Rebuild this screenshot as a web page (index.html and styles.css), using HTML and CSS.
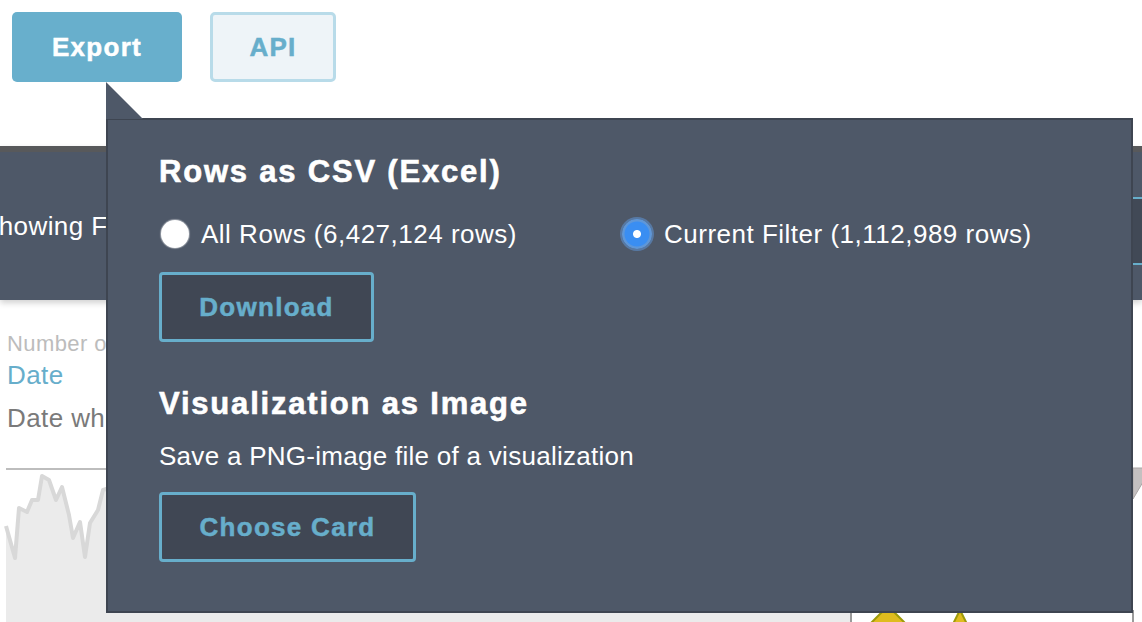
FILE: index.html
```html
<!DOCTYPE html>
<html lang="en">
<head>
<meta charset="utf-8">
<title>Export</title>
<link rel="stylesheet" href="styles.css">
</head>
<body>
<div class="page">
  <div class="toolbar">
    <button class="btn btn-primary">Export</button>
    <button class="btn btn-ghost">API</button>
  </div>

  <div class="band">
    <div class="band-text">Showing First</div>
    <div class="band-input"></div>
  </div>

  <div class="details">
    <div class="detail-label">Number of Rows by</div>
    <div class="detail-title">Date</div>
    <div class="detail-desc">Date when the record was created</div>
  </div>

  <svg class="chart" width="1142" height="162" viewBox="0 0 1142 162" xmlns="http://www.w3.org/2000/svg">
    <line x1="6" y1="9" x2="900" y2="9" stroke="#bdbdbd" stroke-width="2"/>
    <polygon fill="#ebebeb" points="6,66 15,98 19,48 27,52 32,40 38,40 42,16 49,20 56,40 62,27 69,55 73,78 80,62 85,97 90,63 98,50 103,30 120,25 140,60 170,40 200,70 240,35 280,55 320,30 360,65 400,45 440,80 480,50 520,60 560,40 600,75 640,55 680,70 720,45 760,90 800,60 840,130 851,150 851,162 6,162"/>
    <polyline fill="none" stroke="#d8d8d8" stroke-width="4" stroke-linejoin="round" points="6,66 15,98 19,48 27,52 32,40 38,40 42,16 49,20 56,40 62,27 69,55 73,78 80,62 85,97 90,63 98,50 103,30 120,25 140,60 170,40 200,70 240,35 280,55 320,30 360,65 400,45 440,80 480,50 520,60 560,40 600,75 640,55 680,70 720,45 760,90 800,60 840,130 851,150"/>
    <line x1="851" y1="150" x2="851" y2="162" stroke="#9a9a9a" stroke-width="2"/>
    <polygon fill="#dfbc1e" stroke="#9c9a0a" stroke-width="2" points="868,166 888,146 908,166"/>
    <polygon fill="#dfbc1e" stroke="#9c9a0a" stroke-width="2" points="952,166 960,150 968,166"/>
    <polygon fill="#c4c0c0" stroke="#aaa6a6" stroke-width="1" points="1133,8 1143,8 1143,22 1133,39"/>
    <line x1="1133" y1="150" x2="1133" y2="162" stroke="#9a9a9a" stroke-width="2"/>
  </svg>

  <div class="popover">
    <h2 class="pop-title">Rows as CSV (Excel)</h2>
    <div class="radios">
      <label class="option option-first">
        <span class="radio"></span>
        <span class="option-label">All Rows (6,427,124 rows)</span>
      </label>
      <label class="option">
        <span class="radio radio-checked"></span>
        <span class="option-label">Current Filter (1,112,989 rows)</span>
      </label>
    </div>
    <button class="btn btn-outline btn-download">Download</button>

    <h2 class="pop-title pop-title-second">Visualization as Image</h2>
    <p class="pop-text">Save a PNG-image file of a visualization</p>
    <button class="btn btn-outline btn-card">Choose Card</button>
  </div>
</div>
</body>
</html>
```

FILE: styles.css
```css
* {
  box-sizing: border-box;
}

html, body {
  margin: 0;
  padding: 0;
  background: #ffffff;
  overflow: hidden;
}

body {
  width: 1142px;
  height: 622px;
  font-family: "Liberation Sans", Arial, sans-serif;
}

.page {
  position: relative;
  width: 1142px;
  height: 622px;
}

.toolbar {
  display: flex;
  gap: 28px;
  padding: 12px 12px 0;
}

.btn {
  font-family: "Liberation Sans", Arial, sans-serif;
  font-weight: bold;
  font-size: 26px;
  line-height: 30px;
  letter-spacing: 1.3px;
  -webkit-text-stroke: 0.5px currentColor;
  border-radius: 5px;
  cursor: pointer;
  padding: 0;
}

.btn-primary {
  width: 170px;
  height: 70px;
  border: none;
  background: #68afcc;
  color: #ffffff;
}

.btn-ghost {
  width: 126px;
  height: 70px;
  border: 3px solid #b8dbe9;
  background: #eef4f8;
  color: #67aecb;
}

.band {
  margin-top: 64px;
  height: 154px;
  border-top: 6px solid #58595b;
  background: #4e5868;
  display: flex;
  align-items: center;
  box-shadow: 0 3px 6px rgba(0, 0, 0, 0.18);
}

.band-text {
  color: #ffffff;
  font-size: 26px;
  letter-spacing: 0.4px;
  margin-left: -19px;
  white-space: nowrap;
}

.band-input {
  margin-left: auto;
  margin-top: 10px;
  width: 200px;
  height: 68px;
  border-top: 2px solid #67aecb;
  border-bottom: 2px solid #67aecb;
  background: #414956;
}

.details {
  padding-left: 7px;
  white-space: nowrap;
}

.detail-label {
  margin-top: 31px;
  font-size: 22px;
  line-height: 26px;
  letter-spacing: 0.4px;
  color: #bcbcbc;
}

.detail-title {
  margin-top: 3px;
  font-size: 26px;
  line-height: 30px;
  letter-spacing: 0.4px;
  color: #67aecb;
}

.detail-desc {
  margin-top: 13px;
  font-size: 26px;
  line-height: 30px;
  letter-spacing: 0.4px;
  color: #7a7a7a;
}

.chart {
  display: block;
  margin-top: 27px;
}

/* popover overlay */
.popover {
  position: absolute;
  left: 106px;
  top: 118px;
  width: 1027px;
  height: 495px;
  background: #4e5868;
  border: 2px solid #3e4551;
  padding: 34px 0 0 51px;
  color: #ffffff;
}

.popover::before {
  content: "";
  position: absolute;
  left: -2px;
  top: -38px;
  width: 37px;
  height: 37px;
  background: #4e5868;
  clip-path: polygon(0 0, 100% 100%, 0 100%);
}

.pop-title {
  margin: 0;
  font-size: 31px;
  line-height: 36px;
  letter-spacing: 1.8px;
  -webkit-text-stroke: 0.6px currentColor;
  font-weight: bold;
}

.pop-title-second {
  margin-top: 44px;
}

.radios {
  display: flex;
  margin-top: 29px;
}

.option {
  display: flex;
  align-items: center;
  gap: 12px;
}

.option-first {
  width: 463px;
}

.radio {
  width: 28px;
  height: 28px;
  margin-left: 2px;
  border-radius: 50%;
  background: #ffffff;
  box-shadow: 0 0 1px 1px rgba(255, 255, 255, 0.4);
}

.radio-checked {
  width: 30px;
  height: 30px;
  margin-left: 0;
  background: radial-gradient(circle, #ffffff 0 3.5px, #3a8ef2 4.5px, #3a8ef2 12px, #5f97d8 13px);
  box-shadow: 0 0 0 2px rgba(95, 150, 215, 0.55);
}

.option-label {
  font-size: 26px;
  line-height: 30px;
  letter-spacing: 0.5px;
}

.btn-outline {
  display: block;
  height: 70px;
  border: 3px solid #67aecb;
  background: #404754;
  color: #67aecb;
  border-radius: 4px;
}

.btn-download {
  margin-top: 23px;
  width: 215px;
}

.pop-text {
  margin: 19px 0 0;
  font-size: 26px;
  line-height: 30px;
  letter-spacing: 0.28px;
}

.btn-card {
  margin-top: 21px;
  width: 257px;
}
```
